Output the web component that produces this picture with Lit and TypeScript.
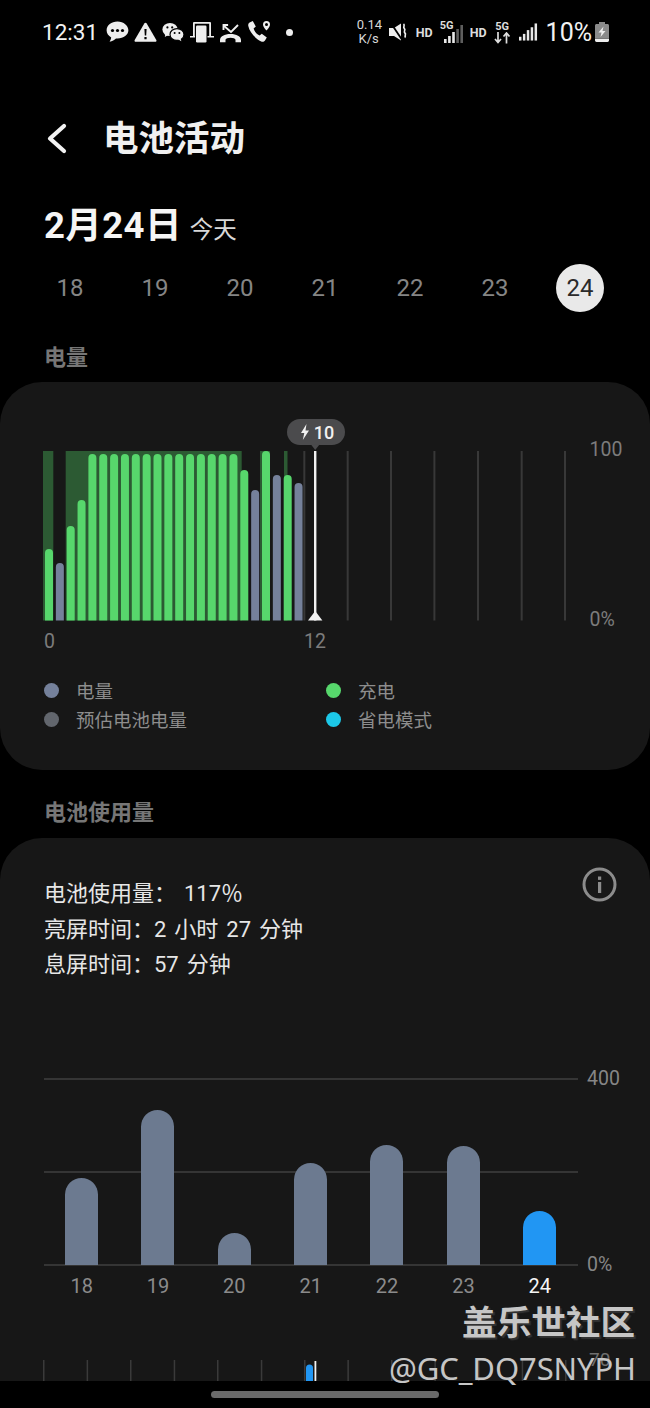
import { LitElement, html, css, svg } from "lit";
import { customElement } from "lit/decorators.js";

const GREEN = "#57d76c";
const SLATE = "#75819b";
const PITCH = 10.85;
const BASE = 201.5; // plot bottom within the svg (y=620.5 on page, svg starts at 419)
const PAGE0 = 419;

// [top on page, colour]
const bars: [number, string][] = [
  [549, GREEN], [563, SLATE], [526, GREEN], [500, GREEN],
  ...Array.from({ length: 14 }, (): [number, string] => [454, GREEN]),
  [470, GREEN], [490, SLATE], [451, GREEN], [475, SLATE], [475, GREEN], [483, SLATE],
];
const shades: [number, number][] = [[43, 53.3], [65.7, 241.7], [260, 270], [284, 287.5]];
const grid = [304.3, 347.7, 391, 434.4, 478, 521.7, 565];

function topRound(x: number, top: number, bottom: number, r: number) {
  return `M${x} ${bottom}V${top + r}a${r} ${r} 0 0 1 ${2 * r} 0V${bottom}Z`;
}

const usage = [
  { d: "18", top: 1178 }, { d: "19", top: 1110 }, { d: "20", top: 1233 }, { d: "21", top: 1163 },
  { d: "22", top: 1145 }, { d: "23", top: 1146 }, { d: "24", top: 1211, now: true },
];

@customElement("app-root")
export class AppRoot extends LitElement {
  static styles = css`
    :host {
      display: block; position: relative; width: 650px; height: 1408px; overflow: hidden;
      background: #000; color: #eee;
      font-family: Roboto, "Noto Sans CJK SC", sans-serif;
    }
    .status { height: 64px; display: flex; align-items: center; padding: 0 41px 0 42px; }
    .time { font-size: 22.5px; width: 64px; color: #f2f2f2; letter-spacing: 0; }
    .status svg { display: block; flex: none; fill: #eee; }
    .left { display: flex; align-items: center; }
    .spacer { flex: 1; }
    .speed { font-size: 13px; line-height: 14.5px; text-align: center; color: #d8d8d8; width: 24px; margin-right: 8px; }
    .hd { font-size: 12.5px; font-weight: 700; color: #ddd; }
    .pct { font-size: 25px; color: #f2f2f2; margin: 0 3px 0 8px; }
    .net { display: flex; flex-direction: column; align-items: center; font-size: 11px; font-weight: 700; line-height: 11px; color: #ddd; }
    .mute { margin-right: 8px; }
    .hd1 { margin-right: 7px; }
    .hd2 { margin-right: 7px; }
    .sig5g { position: relative; width: 24px; height: 24px; margin-right: 6px; }
    .sig5g .net { position: absolute; left: 0; top: 0; }
    .sig5g div.bars { position: absolute; left: 4px; top: 5px; }
    .updown { margin-right: 8px; width: 17px; }
    .i-chat, .i-warn { margin-right: 5px; }
    .i-wechat, .i-cast { margin-right: 6px; }
    .i-missed { margin: 2px 6px 0 0; }
    .i-call { margin-right: 15px; }

    .head { height: 66px; margin-top: 42px; display: flex; align-items: center; padding-left: 44px; }
    .head svg { display: block; margin-right: 34px; }
    .head h1 { margin: 0; font-size: 35.5px; font-weight: 700; line-height: 44px; color: #f0f0f0; }

    .date { margin-top: 24px; padding-left: 44px; display: flex; align-items: baseline; height: 50px; }
    .date b { font-size: 36.5px; font-weight: 700; color: #f5f5f5; letter-spacing: 0.4px; }
    .date span { font-size: 23.5px; margin-left: 8px; color: #d8d8d8; }
    .days { display: flex; margin-top: 18px; padding-left: 27.5px; height: 48px; }
    .days div { width: 85px; display: flex; justify-content: center; align-items: center; font-size: 24px; color: #858585; }
    .days div.on span { width: 48px; height: 48px; border-radius: 50%; background: #e9e9e9; color: #2a2a2a; display: flex; align-items: center; justify-content: center; }

    .label { padding-left: 44px; font-size: 22px; font-weight: 700; color: #767676; line-height: 30px; }
    .l1 { margin-top: 31px; height: 39px; }
    .l2 { margin-top: 28px; height: 40px; }

    .card { background: #171717; border-radius: 42px; }
    .c1 { height: 388px; box-sizing: border-box; padding-top: 37px; }
    .plot { position: relative; height: 231px; }
    .plot svg { display: block; }
    .pill { position: absolute; left: 287px; top: 0; width: 58px; height: 26px; display: flex; align-items: center; justify-content: center; gap: 4px; font-size: 18px; font-weight: 500; color: #f2f2f2; padding-left: 2px; box-sizing: border-box; }
    .pill svg { fill: #f2f2f2; }
    .axis { position: absolute; font-size: 19.5px; color: #7c7c7c; line-height: 22px; }
    .a100 { left: 589.5px; top: 20px; }
    .a0pct { left: 589.5px; top: 190px; }
    .a0 { left: 44px; top: 212px; }
    .a12 { left: 304px; top: 212px; }

    .legend { margin-top: 28px; padding-left: 44px; display: grid; grid-template-columns: 282px 1fr; row-gap: 5px; }
    .lg { display: flex; align-items: center; height: 24px; font-size: 18.5px; color: #8d8d8d; }
    .lg i { width: 15px; height: 15px; border-radius: 50%; margin-right: 17px; flex: none; }
    .d-batt { background: #75819b; }
    .d-chg { background: #57d76c; }
    .d-est { background: #62666d; }
    .d-save { background: #1cc8e8; }

    .c2 { height: 640px; box-sizing: border-box; padding-top: 38px; position: relative; }
    .info { position: absolute; left: 582px; top: 29px; }
    .stat { padding-left: 44px; font-size: 22px; line-height: 35.5px; color: #e6e6e6; height: 35.5px; word-spacing: 2.5px; }
    .chart2 { position: relative; margin-top: 95px; height: 187px; margin-left: 44px; width: 534px; }
    .chart2 .rule { height: 2px; background: #353535; margin-bottom: 91px; }
    .chart2 .rule:last-of-type { margin-bottom: 0; }
    .cols { position: absolute; left: 21px; bottom: 0; display: flex; gap: 43.35px; align-items: flex-end; }
    .cols i { display: block; width: 33px; border-radius: 16.5px 16.5px 0 0; background: #6c7a90; }
    .cols i.now { background: #2196f3; }
    .y { position: absolute; left: 543px; font-size: 19.5px; color: #868686; line-height: 22px; }
    .y4 { top: -10px; }
    .y0 { top: 176px; }
    .xl { margin: 9px 0 0 0; padding-left: 43.5px; display: flex; width: 534px; }
    .xl div { width: 76.35px; flex: none; text-align: center; font-size: 20px; color: #8b8b8b; line-height: 24px; }
    .xl div.now { color: #f5f5f5; }
    .next { position: relative; margin-top: 62px; height: 24px; }
    .next svg { display: block; }
    .n70 { position: absolute; left: 589px; top: -12px; font-size: 19px; color: #6f6f6f; }

    .nav { position: absolute; left: 0; right: 0; bottom: 0; height: 27px; background: #000; display: flex; justify-content: center; padding-top: 10px; box-sizing: border-box; }
    .nav i { display: block; width: 228px; height: 7px; border-radius: 4px; background: #6a6a6a; }

    .mark { position: absolute; right: 15px; top: 1300px; text-align: right; color: #c6c6c6; }
    .mark b { display: block; font-size: 34.6px; line-height: 46px; font-weight: 700; text-shadow: 2px 2px 1px #333; }
    .mark span { display: block; font-family: "Noto Sans", sans-serif; font-size: 31px; line-height: 45px; font-weight: 400; letter-spacing: -0.1px; margin-right: -1px; }
  `;

  private statusLeft() {
    return html`<div class="left">
      <svg class="i-chat" width="23" height="22" viewBox="0 0 23 22"><path d="M11.5 0.5C5.4 0.5.6 4.4.6 9.3c0 3 1.9 5.6 4.6 7.2-.1 1.4-.9 3-1.6 4.2 2.6-.4 5-1.7 6.4-3.2.5.1 1 .1 1.5.1 6.1 0 10.9-3.9 10.9-8.3S17.6.5 11.5.5z"/><g fill="#000"><circle cx="6.5" cy="9.5" r="1.6"/><circle cx="11.5" cy="9.5" r="1.6"/><circle cx="16.5" cy="9.5" r="1.6"/></g></svg>
      <svg class="i-warn" width="23" height="20" viewBox="0 0 23 20"><path d="M11.5.8c.5 0 .9.3 1.2.8l9.6 16.3c.5.9 0 1.9-1.1 1.9H1.8c-1.1 0-1.6-1-1.1-1.9L10.3 1.6c.3-.5.7-.8 1.2-.8z"/><path fill="#000" d="M10.4 7h2.2l-.4 6.5h-1.400zM10.400 15h2.200v2.200h-2.200z"/></svg>
      <svg class="i-wechat" width="22" height="20" viewBox="0 0 22 20"><ellipse cx="8" cy="7.500" rx="7.600" ry="6.600"/><path d="M3.500 11.500 2.800 15 7 12.600z"/><ellipse cx="15" cy="12.500" rx="7" ry="5.900" stroke="#000" stroke-width="1.200"/><path d="M18.500 16l.8 3.200-3.600-2.200z"/><g fill="#000"><circle cx="5.400" cy="5.400" r="1.100"/><circle cx="10.200" cy="5.400" r="1.100"/><circle cx="12.600" cy="11" r="1"/><circle cx="17.400" cy="11" r="1"/></g></svg>
      <svg class="i-cast" width="24" height="22" viewBox="0 0 24 22"><path d="M4 1h16a1 1 0 0 1 1 1v13h-1.800V2.800H4.800V15H3V2a1 1 0 0 1 1-1z"/><rect x="6" y="4.500" width="10.500" height="17" rx="1.200"/><path d="M0 15h5v1.500H0zM17.500 15H24v1.500h-6.500z"/></svg>
      <svg class="i-missed" width="21" height="19" viewBox="0 0 21 19"><path d="M3.500 1.500 11 8l7-7" fill="none" stroke="#eee" stroke-width="1.900"/><path d="M2.600 1h5.500M3.500.500v5.500" fill="none" stroke="#eee" stroke-width="1.900"/><path d="M0 16c0-3.500 4.500-6 10.500-6S21 12.500 21 16v2.300h-5.500v-2.600c0-1.200-2.500-2-5-2s-5 .8-5 2v2.600H0z"/></svg>
      <svg class="i-call" width="24" height="24" viewBox="0 0 24 24"><path d="M2.600 2.500 5.800 1l3 5.600-2.200 2c.8 2.700 3.200 5.600 6 7l2.200-1.800 5 3.600-1.800 3.100c-.8 1.200-2.400 1.700-3.800 1C8 18.500 2.500 12 1.300 6c-.3-1.500.3-2.900 1.300-3.500z"/><path d="M19.500 1a3.500 3.500 0 0 0-3.500 3.500c0 2.400 3.500 6 3.500 6s3.500-3.600 3.500-6A3.500 3.500 0 0 0 19.500 1zm0 2a1.500 1.500 0 1 1 0 3 1.500 1.500 0 0 1 0-3z"/></svg>
      <svg width="7" height="7" viewBox="0 0 7 7"><circle cx="3.500" cy="3.500" r="3.500"/></svg>
    </div>`;
  }

  private signal(dim: number, w = 20, h = 18) {
    const hs = [4, 7, 11, 14, 18];
    return html`<svg width=${w} height=${h} viewBox="0 0 20 18">
      ${hs.map((v, i) => svg`<rect x=${i * 4.1} y=${18 - v} width="2.600" height=${v} fill=${i >= dim ? "#5e5e5e" : "#e8e8e8"}></rect>`)}
    </svg>`;
  }

  private statusRight() {
    return html`
      <div class="speed">0.14<br />K/s</div>
      <svg class="mute" width="19" height="20" viewBox="0 0 19 20"><path d="M0 6h5L12 1.500v17L5 14H0z"/><path d="M1.500.500 13.500 18.500" stroke="#000" stroke-width="1.800"/><path d="M14.500 2c2 1.500-1 3 .8 4.500s-1.200 3 .6 4.500-1 3 .7 4.500" fill="none" stroke="#eee" stroke-width="1.700"/></svg>
      <span class="hd hd1">HD</span>
      <div class="sig5g">
        <span class="net">5G</span>
        <div class="bars">${this.signal(3, 20, 18)}</div>
      </div>
      <span class="hd hd2">HD</span>
      <div class="net updown">5G<svg width="17" height="12" viewBox="0 0 17 12"><path d="M4 0v10M1 7l3 3.500L7 7M12.500 11.500V1.500M9.500 4.500l3-3.500 3 3.500" fill="none" stroke="#ddd" stroke-width="1.700"/></svg></div>
      ${this.signal(5, 19, 18)}
      <span class="pct">10%</span>
      <svg width="14" height="20" viewBox="0 0 14 20"><path fill="#8a8a8a" d="M4 0h6v2h2.500c.8 0 1.500.7 1.500 1.500V16H0V3.500C0 2.700.7 2 1.500 2H4z"/><path fill="#eee" d="M0 16.500h14v1.800c0 .9-.7 1.700-1.500 1.700h-11C.7 20 0 19.200 0 18.300z"/><path fill="#eee" d="M8.500 4.500 3.500 10.500h3l-1 4.500 5-6h-3z"/></svg>
    `;
  }

  private batteryPlot() {
    const top = (y: number) => y - PAGE0;
    return html`<svg width="650" height="231" viewBox="0 0 650 231">
      ${shades.map(([a, b]) => svg`<rect x=${a} y="32" width=${b - a} height=${BASE - 32} fill="#2c5a33"></rect>`)}
      ${grid.map((x) => svg`<rect x=${x - 1} y="32" width="2" height=${BASE - 32} fill="#383838"></rect>`)}
      ${bars.map(([t, c], i) => {
        const x = 45 + i * PITCH;
        return svg`<path d=${topRound(x, top(t), BASE, 4)} fill=${c}></path>`;
      })}
      <rect x="314" y="32" width="2.400" height=${BASE - 32} fill="#f2f2f2"></rect>
      <path d="M308 ${BASE}L315.200 192L322.400 ${BASE}Z" fill="#f2f2f2"></path>
      <rect x="287" y="0" width="58" height="26" rx="13" fill="#4b4b4d"></rect>
      <path d="M311 25.500h8.500L315.200 31z" fill="#4b4b4d"></path>
    </svg>`;
  }

  render() {
    return html`
      <div class="status">
        <span class="time">12:31</span>
        ${this.statusLeft()}
        <div class="spacer"></div>
        ${this.statusRight()}
      </div>

      <div class="head">
        <svg width="25" height="32" viewBox="0 0 25 32"><path d="M20 3 6 15.500l14 12.500" fill="none" stroke="#f2f2f2" stroke-width="4.200" stroke-linecap="round" stroke-linejoin="round"/></svg>
        <h1>电池活动</h1>
      </div>

      <div class="date"><b>2月24日</b><span>今天</span></div>
      <div class="days">
        ${["18", "19", "20", "21", "22", "23"].map((d) => html`<div>${d}</div>`)}
        <div class="on"><span>24</span></div>
      </div>

      <div class="label l1">电量</div>
      <div class="card c1">
        <div class="plot">
          ${this.batteryPlot()}
          <div class="pill">
            <svg width="10" height="16" viewBox="0 0 10 16"><path d="M6.500 0 1 9h3.300L2.800 16 9 6.500H5.500z"/></svg>
            <span>10</span>
          </div>
          <span class="axis a100">100</span>
          <span class="axis a0pct">0%</span>
          <span class="axis a0">0</span>
          <span class="axis a12">12</span>
        </div>
        <div class="legend">
          <div class="lg"><i class="d-batt"></i>电量</div>
          <div class="lg"><i class="d-chg"></i>充电</div>
          <div class="lg"><i class="d-est"></i>预估电池电量</div>
          <div class="lg"><i class="d-save"></i>省电模式</div>
        </div>
      </div>

      <div class="label l2">电池使用量</div>
      <div class="card c2">
        <svg class="info" width="35" height="35" viewBox="0 0 35 35"><circle cx="17.500" cy="17.500" r="15.500" fill="none" stroke="#8c8c8c" stroke-width="3"/><rect x="16" y="15" width="3.200" height="11" fill="#8c8c8c"/><rect x="16" y="9.500" width="3.200" height="3.400" fill="#8c8c8c"/></svg>
        <div class="stat">电池使用量： 117％</div>
        <div class="stat">亮屏时间：2 小时 27 分钟</div>
        <div class="stat">息屏时间：57 分钟</div>
        <div class="chart2">
          <div class="rule"></div>
          <div class="rule"></div>
          <div class="rule"></div>
          <div class="cols">
            ${usage.map((u) => html`<i class=${u.now ? "now" : ""} style="height:${1265 - u.top}px"></i>`)}
          </div>
          <span class="y y4">400</span>
          <span class="y y0">0%</span>
        </div>
        <div class="xl">
          ${usage.map((u) => html`<div class=${u.now ? "now" : ""}>${u.d}</div>`)}
        </div>
        <div class="next">
          <svg width="650" height="24" viewBox="0 0 650 24">
            ${[43, 86.6, 130, 173.7, 217, 260.8, 304, 347.4, 391, 434.4, 478, 521.7, 565].map(
              (x) => svg`<rect x=${x} y="0" width="1.500" height="24" fill="#3a3a3a"></rect>`
            )}
            <path d="M306 24V8a3.500 3.500 0 0 1 7 0V24Z" fill="#2196f3"></path>
            <rect x="314.500" y="1" width="1.800" height="23" fill="#f2f2f2"></rect>
          </svg>
          <span class="n70">70</span>
        </div>
      </div>

      <div class="nav"><i></i></div>
      <div class="mark"><b>盖乐世社区</b><span>@GC_DQ7SNYPH</span></div>
    `;
  }
}
